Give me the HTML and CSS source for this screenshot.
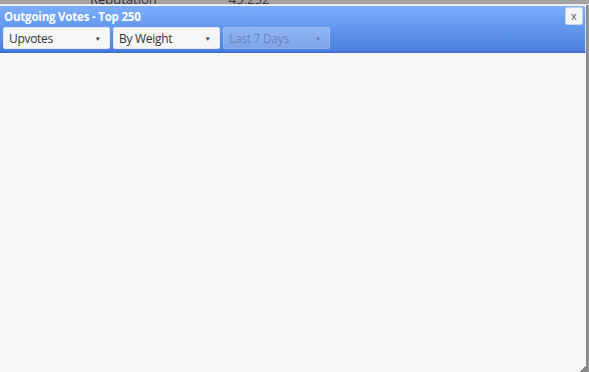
FILE: index.html
```html
<!DOCTYPE html>
<html lang="en">
<head>
    <meta charset="UTF-8">
    <title>Outgoing Votes</title>
    <link rel="stylesheet" href="styles.css">
</head>
<body>
    <div class="behind">
        <span class="behind-label">Reputation</span>
        <span class="behind-value">45,252</span>
    </div>
    <div class="dialog">
        <div class="dialog-head">
            <div class="title-row">
                <span class="dialog-title">Outgoing Votes - Top 250</span>
                <button class="close-btn">x</button>
            </div>
            <div class="filters">
                <div class="pick">Upvotes<span class="caret">&#9662;</span></div>
                <div class="pick">By Weight<span class="caret">&#9662;</span></div>
                <div class="pick disabled">Last 7 Days<span class="caret">&#9662;</span></div>
            </div>
        </div>
        <div class="dialog-body">
            <span class="grip"></span>
        </div>
    </div>
</body>
</html>
```

FILE: styles.css
```css
body {
    margin: 0;
    height: 372px;
    overflow: hidden;
    background: #9c9c9c;
    font-family: "Open Sans", sans-serif;
}

.behind {
    height: 4px;
    overflow: hidden;
    background: #a3a3a3;
    border-bottom: 1px solid #e8e8e8;
    display: flex;
    font-size: 13px;
    line-height: 14px;
    color: #333;
}

.behind-label {
    margin: -8px 0 0 90px;
}

.behind-value {
    margin: -8px 0 0 72px;
}

.dialog {
    width: 586px;
    height: 367px;
    background: #f6f6f6;
    border-right: 2px solid #8a8a8a;
    display: flex;
    flex-direction: column;
}

.dialog-head {
    margin-top: 1px;
    background: linear-gradient(#7aaefb, #4b80e0);
    border-bottom: 2px solid #3f72d2;
    border-right: 1px solid #d6e2f5;
    padding: 1px 2px 2px 3px;
    border-radius: 0 3px 0 0;
}

.title-row {
    display: flex;
    justify-content: space-between;
    align-items: flex-start;
    height: 20px;
}

.dialog-title {
    color: #fff;
    font-weight: bold;
    font-size: 11.5px;
    letter-spacing: -0.2px;
    line-height: 16px;
    margin: 2px 0 0 1px;
}

.close-btn {
    width: 18px;
    height: 18px;
    padding: 0;
    border: 1px solid #c9d3e0;
    border-radius: 2px;
    background: #f6f6f6;
    color: #555;
    font-family: "Open Sans", sans-serif;
    font-size: 11px;
    line-height: 14px;
}

.filters {
    display: flex;
    gap: 3px;
}

.pick {
    width: 107px;
    height: 22px;
    box-sizing: border-box;
    padding: 0 9px 0 5px;
    background: #f6f6f6;
    border: 1px solid #dde6f3;
    border-radius: 2px;
    font-size: 12px;
    letter-spacing: -0.3px;
    color: #333;
    display: flex;
    align-items: center;
    justify-content: space-between;
}

.pick .caret {
    font-size: 7px;
    color: #333;
}

.pick.disabled {
    background: rgba(255, 255, 255, 0.28);
    border-color: rgba(255, 255, 255, 0.15);
    color: rgba(60, 80, 120, 0.45);
}

.pick.disabled .caret {
    color: rgba(60, 80, 120, 0.5);
}

.dialog-body {
    flex: 1;
    position: relative;
}

.grip {
    position: absolute;
    right: 0;
    bottom: 0;
    width: 6px;
    height: 6px;
    background: linear-gradient(135deg, transparent 50%, #888 50%);
}
```
